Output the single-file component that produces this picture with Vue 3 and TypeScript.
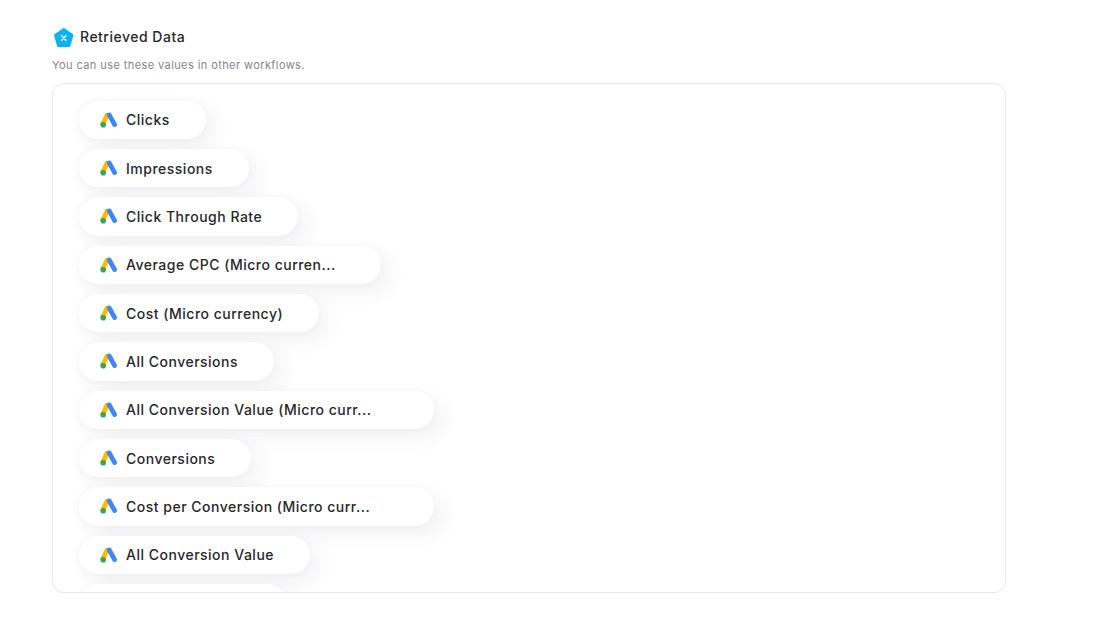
<script setup lang="ts">
interface Metric {
  label: string
  // extra room the app leaves after a shortened label
  trail?: number
}

const metrics: Metric[] = [
  { label: 'Clicks' },
  { label: 'Impressions' },
  { label: 'Click Through Rate' },
  { label: 'Average CPC (Micro curren...', trail: 45 },
  { label: 'Cost (Micro currency)' },
  { label: 'All Conversions' },
  { label: 'All Conversion Value (Micro curr...', trail: 62 },
  { label: 'Conversions' },
  { label: 'Cost per Conversion (Micro curr...', trail: 64 },
  { label: 'All Conversion Value' },
  { label: 'Conversion Value' },
]
</script>

<template>
  <main class="page">
    <header class="head">
      <svg class="brand" width="22" height="22" viewBox="0 0 22 22" aria-hidden="true">
        <path d="M10.75 4 19.5 10 16.4 21H5.1L2 10Z" fill="#0bb2f6" stroke="#0bb2f6" stroke-width="2" stroke-linejoin="round" />
        <path d="M8.6 10.8 12.9 15.2M12.9 10.8 8.6 15.2" fill="none" stroke="#fff" stroke-width="1.6" stroke-linecap="round" />
      </svg>
      <h1 class="title">Retrieved Data</h1>
    </header>
    <p class="sub">You can use these values in other workflows.</p>

    <section class="panel">
      <div
        v-for="m in metrics"
        :key="m.label"
        class="chip"
        :style="m.trail ? { paddingRight: `${m.trail}px` } : undefined">
        <svg class="ads" width="18" height="16" viewBox="0 0 18 16" aria-hidden="true">
          <path d="M7 3.2 2.8 12" fill="none" stroke="#fbbc04" stroke-width="4.8" stroke-linecap="round" />
          <path d="M9.2 2.9 14.6 12.6" fill="none" stroke="#4285f4" stroke-width="4.8" stroke-linecap="round" />
          <circle cx="3.2" cy="12.7" r="2.8" fill="#34a853" />
        </svg>
        <span class="label">{{ m.label }}</span>
      </div>
    </section>
  </main>
</template>

<style scoped>
.page {
  width: 954px;
  margin-left: 52px;
  padding-top: 25px;
  font-family: Inter, "Liberation Sans", sans-serif;
}
.head { display: flex; align-items: center; gap: 5px; margin-left: 1px; height: 22px; }
.brand { flex-shrink: 0; }
.title { margin: 0; font-size: 14px; font-weight: 500; letter-spacing: 0.5px; color: #27272a; }
.sub { margin: 11px 0 0; font-size: 11px; line-height: 14px; letter-spacing: 0.41px; color: #85858b; }

.panel {
  height: 510px;
  box-sizing: border-box;
  margin-top: 11px;
  padding: 16.6px 0 0 26px;
  display: flex;
  flex-direction: column;
  align-items: flex-start;
  gap: 10px;
  overflow: hidden;
  background: #fff;
  border: 1px solid #e8e8eb;
  border-radius: 12px;
}
.chip {
  flex-shrink: 0;
  display: flex;
  align-items: center;
  gap: 8px;
  height: 38.33px;
  padding: 0 36px 0 21px;
  background: #fff;
  border-radius: 20px;
  box-shadow: 8px 8px 20px rgba(70, 60, 100, 0.07), -1px 1px 8px rgba(70, 60, 100, 0.04);
}
.ads { flex-shrink: 0; }
.label { font-size: 14px; font-weight: 500; letter-spacing: 0.5px; color: #27272a; white-space: nowrap; }
</style>
